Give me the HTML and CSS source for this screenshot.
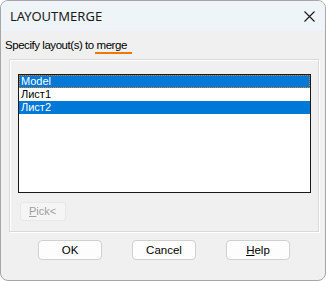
FILE: index.html
```html
<!DOCTYPE html>
<html>
<head>
<meta charset="utf-8">
<link rel="stylesheet" href="styles.css">
</head>
<body>
<div class="window">
  <div class="titlebar">
    <span class="title">LAYOUTMERGE</span>
    <svg class="close" width="11" height="11" viewBox="0 0 11 11"><path d="M0.5 0.5 L10.5 10.5 M10.5 0.5 L0.5 10.5" stroke="#1a1a1a" stroke-width="1.1" fill="none"/></svg>
  </div>
  <div class="content">
    <div class="prompt">Specify layout(s) to <span class="hl">merge</span></div>
    <div class="group">
      <div class="listbox">
        <div class="item sel focus">Model</div>
        <div class="item">Лист1</div>
        <div class="item sel">Лист2</div>
      </div>
      <div class="pick"><span class="u">P</span>ick&lt;</div>
    </div>
    <div class="buttons">
      <div class="btn">OK</div>
      <div class="btn">Cancel</div>
      <div class="btn"><span class="u">H</span>elp</div>
    </div>
  </div>
</div>
</body>
</html>
```
FILE: styles.css
```css
* { box-sizing: border-box; }
html, body { margin: 0; padding: 0; background: #ffffff; }
body { width: 326px; height: 281px; overflow: hidden; }
.window {
  width: 326px;
  height: 281px;
  border: 1px solid #a6a6a6;
  border-radius: 8px;
  overflow: hidden;
  background: #f0f0f0;
  display: flex;
  flex-direction: column;
}
.titlebar {
  height: 30px;
  background: #eff4f9;
  display: flex;
  align-items: center;
  justify-content: space-between;
  padding: 0 10px 0 9px;
}
.title {
  font-family: "Noto Sans", sans-serif;
  font-size: 13px;
  color: #1a1a1a;
}
.close { display: block; }
.content {
  flex: 1;
  display: flex;
  flex-direction: column;
  font-family: "Liberation Sans", Arial, sans-serif;
}
.prompt {
  font-size: 11.5px;
  letter-spacing: -0.45px;
  color: #000;
  height: 28px;
  padding: 7px 0 0 4px;
  line-height: 14px;
}
.hl {
  display: inline-block;
  border-bottom: 2px solid #f07800;
  line-height: 14px;
  height: 16px;
  margin-left: -2px;
  padding: 0 5px 0 2px;
}
.group {
  margin-left: 8px;
  width: 310px;
  height: 173px;
  border: 1px solid #d9d9d9;
  box-shadow: inset 1px 1px 0 #ffffff, 1px 1px 0 #ffffff;
  padding: 14px 0 0 8px;
}
.listbox {
  width: 293px;
  height: 119px;
  background: #fff;
  border: 1px solid #1a1a1a;
}
.item {
  height: 13px;
  font-size: 11px;
  line-height: 13px;
  padding-left: 2px;
  color: #000;
}
.item.sel { background: #0078d7; color: #fff; }
.item.focus { outline: 1px dotted #f07800; outline-offset: -1px; }
.pick {
  margin: 9px 0 0 2px;
  width: 46px;
  height: 19px;
  border: 1px solid #e8e8e8;
  border-radius: 3px;
  background: #f5f5f5;
  color: #a0a0a0;
  font-size: 11px;
  line-height: 17px;
  padding-left: 8px;
}
.u { text-decoration: underline; }
.buttons {
  display: flex;
  gap: 30px;
  padding: 8px 0 0 37px;
}
.btn {
  width: 64px;
  height: 20px;
  border: 1px solid #d0d0d0;
  border-radius: 4px;
  background: #fdfdfd;
  font-size: 11.5px;
  line-height: 18px;
  text-align: center;
  color: #000;
}
```
